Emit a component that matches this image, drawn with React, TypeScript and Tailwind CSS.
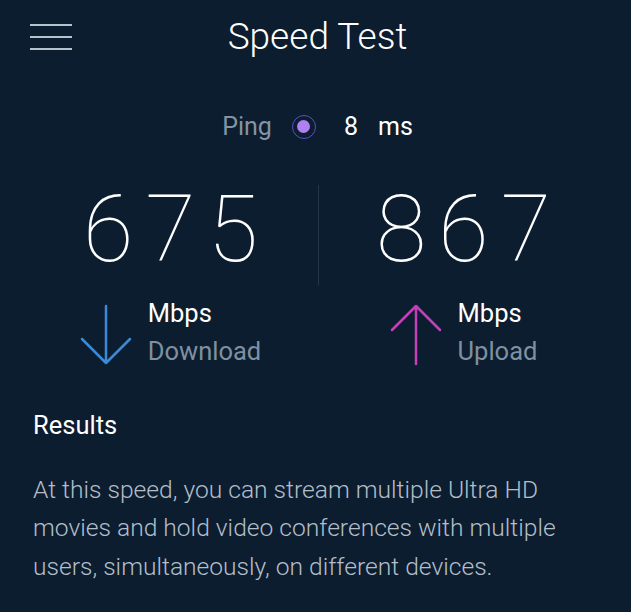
import React from "react";

// Down / up arrow drawn as thin strokes
const ArrowIcon = ({ up, color }: { up?: boolean; color: string }) => (
  <svg width="52" height="62" viewBox="0 0 52 62" fill="none">
    {up ? (
      <path
        d="M26 60V3M2 26L26 2l24 24"
        stroke={color}
        strokeWidth="2.5"
        strokeLinecap="round"
        strokeLinejoin="round"
      />
    ) : (
      <path
        d="M26 2v57M2 35l24 24 24-24"
        stroke={color}
        strokeWidth="2.5"
        strokeLinecap="round"
        strokeLinejoin="round"
      />
    )}
  </svg>
);

function Result({
  value,
  label,
  up,
  color,
  width,
}: {
  value: string;
  label: string;
  up?: boolean;
  color: string;
  width: string;
}) {
  return (
    <div className={`flex flex-col items-center ${width}`}>
      <div className="pl-[12px] text-[92px] font-thin leading-[100px] tracking-[12px] text-white">
        {value}
      </div>
      <div className="mt-[24px] flex items-start gap-[16px]">
        <ArrowIcon up={up} color={color} />
        <div className="-mt-[10px] flex flex-col text-[25.5px] leading-[38px]">
          <span className="text-white">Mbps</span>
          <span className="text-[#7f90a0]">{label}</span>
        </div>
      </div>
    </div>
  );
}

export default function App() {
  return (
    <div
      className="h-[612px] w-[631px] overflow-hidden bg-[#0c1d30] text-white"
      style={{ fontFamily: "Roboto, 'Noto Sans', sans-serif" }}
    >
      {/* header */}
      <div className="grid h-[74px] grid-cols-[1fr_auto_1fr] items-center px-[30px]">
        <button className="flex w-[42px] flex-col gap-[10px]">
          <span className="h-[2px] w-full bg-[#b7c3cb]" />
          <span className="h-[2px] w-full bg-[#b7c3cb]" />
          <span className="h-[2px] w-full bg-[#b7c3cb]" />
        </button>
        <h1 className="pl-[4px] text-[37px] font-light">Speed Test</h1>
        <div />
      </div>

      {/* ping */}
      <div className="mt-[34px] flex items-center justify-center pl-[4px] text-[25px]">
        <span className="text-[#8494a3]">Ping</span>
        <span className="ml-[20px] flex h-[24px] w-[24px] items-center justify-center rounded-full border-[1.5px] border-[#5b4fc4]">
          <span className="h-[13px] w-[13px] rounded-full bg-[#b07ff2]" />
        </span>
        <span className="ml-[28px]">8</span>
        <span className="ml-[20px]">ms</span>
      </div>

      {/* results */}
      <div className="mt-[34px] flex pl-[23px]">
        <Result value="675" label="Download" color="#3b8ad8" width="w-[295px]" />
        <div className="mt-[5px] h-[100px] w-px bg-[#24374a]" />
        <Result value="867" label="Upload" up color="#c540b8" width="w-[289px]" />
      </div>

      <div className="px-[33px]">
        <h2 className="mt-[40px] text-[25.5px] leading-[30px]">Results</h2>
        <p className="mt-[31px] text-[24.6px] font-light leading-[38.5px] text-[#b3bec8]">
          At this speed, you can stream multiple Ultra HD movies and hold video
          conferences with multiple users, simultaneously, on different devices.
        </p>
      </div>
    </div>
  );
}
